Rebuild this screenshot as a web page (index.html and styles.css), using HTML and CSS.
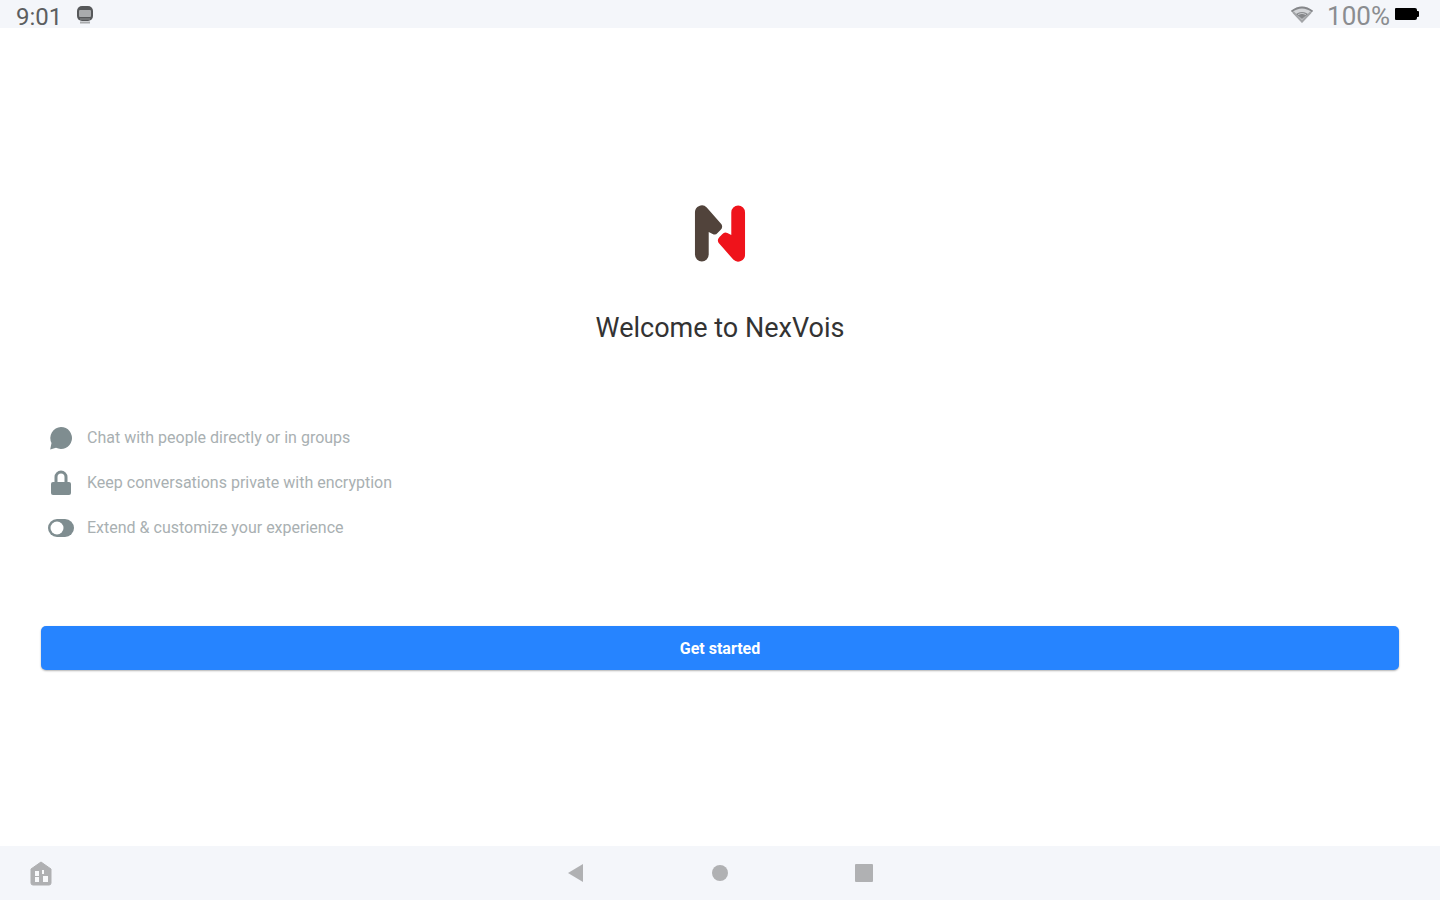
FILE: index.html
```html
<!DOCTYPE html>
<html lang="en">
<head>
    <meta charset="UTF-8">
    <meta name="viewport" content="width=device-width, initial-scale=1.0">
    <title>Welcome to NexVois</title>
    <link rel="stylesheet" href="styles.css">
</head>
<body>
    <header class="status-bar">
        <div class="status-left">
            <span class="clock">9:01</span>
            <svg class="app-icon" width="18" height="18" viewBox="0 0 18 18">
                <rect x="1" y="0" width="16" height="15" rx="5" fill="#56585a"/>
                <rect x="3" y="4" width="12" height="7" rx="1" fill="#a9abad"/>
                <path d="M4 13h10" stroke="#8b8d8f" stroke-width="1"/>
                <path d="M4 16.500h10" stroke="#a9abad" stroke-width="2"/>
            </svg>
        </div>
        <div class="status-right">
            <svg class="wifi" width="24" height="18" viewBox="0 0 24 18">
                <path d="M1 5Q12-4 23 5L12 17z" fill="#d3d5d8"/>
                <path d="M1.500 5.500Q12-2.500 22.500 5.500" fill="none" stroke="#85878a" stroke-width="2"/>
                <path d="M3 6L12 15.500L21 6" fill="none" stroke="#a3a5a8" stroke-width="2"/>
                <path d="M6 8Q12 4 18 8L12 13z" fill="#85878a"/>
                <path d="M8 8.500Q12 6 16 8.500" fill="none" stroke="#c9cbce" stroke-width="1"/>
            </svg>
            <span class="charge">100%</span>
            <svg class="battery" width="26" height="14" viewBox="0 0 26 14">
                <path d="M2 1h19a2 2 0 0 1 2 2v1h1q1 0 1 1v4q0 1-1 1h-1v1a2 2 0 0 1-2 2H2a1 1 0 0 1-1-1V2a1 1 0 0 1 1-1z" fill="#000"/>
            </svg>
        </div>
    </header>

    <main class="welcome">
        <svg class="logo" width="54" height="59" viewBox="0 0 55 59" role="img" aria-label="NexVois">
            <path d="M2 8a7 7 0 0 1 12-5L29 20a5 5 0 0 1-1 6l-3 3a4 4 0 0 1-5 1l-4-2V51a7 7 0 0 1-14 0z" fill="#51433b"/>
            <path d="M2 8a7 7 0 0 1 12-5L29 20a5 5 0 0 1-1 6l-3 3a4 4 0 0 1-5 1l-4-2V51a7 7 0 0 1-14 0z" fill="#ef131b" transform="rotate(180 27.500 29.500)"/>
        </svg>
        <h1>Welcome to NexVois</h1>

        <ul class="features">
            <li>
                <svg width="28" height="28" viewBox="0 0 28 28">
                    <path d="M14 3a11 11 0 1 1-5 20.800L3.200 25.500L4.500 19A11 11 0 0 1 14 3z" fill="#7f8d90"/>
                </svg>
                <span>Chat with people directly or in groups</span>
            </li>
            <li>
                <svg width="28" height="28" viewBox="0 0 28 28">
                    <path d="M9 14V8a5 5 0 0 1 10 0v6" fill="none" stroke="#7f8d90" stroke-width="3"/>
                    <rect x="4" y="13" width="20" height="13" rx="2" fill="#7f8d90"/>
                </svg>
                <span>Keep conversations private with encryption</span>
            </li>
            <li>
                <svg width="28" height="28" viewBox="0 0 28 28">
                    <rect x="1" y="5" width="26" height="18" rx="9" fill="#7f8d90"/>
                    <circle cx="10" cy="14" r="6.500" fill="#fff"/>
                </svg>
                <span>Extend &amp; customize your experience</span>
            </li>
        </ul>

        <button type="button" class="start">Get started</button>
    </main>

    <nav class="nav-bar">
        <button type="button" class="home" aria-label="Home screen">
            <svg width="26" height="26" viewBox="0 0 26 26">
                <path d="M13 2L23 9V23a2 2 0 0 1-2 2H5a2 2 0 0 1-2-2V9z" fill="#afb0b2" stroke="#afb0b2" stroke-linejoin="round"/>
                <path d="M7 11h4v5H7zM7 17h4v5H7zM15 16h5v6h-5zM14 10h2v4h-2z" fill="#f8f9fb"/>
            </svg>
        </button>
        <div class="nav-keys">
            <button type="button" aria-label="Back">
                <svg width="20" height="20" viewBox="0 0 20 20">
                    <path d="M2 10L17 1V19z" fill="#b0b1b3"/>
                </svg>
            </button>
            <button type="button" aria-label="Home">
                <svg width="20" height="20" viewBox="0 0 20 20">
                    <circle cx="10" cy="10" r="8" fill="#b0b1b3"/>
                </svg>
            </button>
            <button type="button" aria-label="Recent apps">
                <svg width="20" height="20" viewBox="0 0 20 20">
                    <rect x="1" y="1" width="18" height="18" rx="1" fill="#b0b1b3"/>
                </svg>
            </button>
        </div>
    </nav>
</body>
</html>
```
FILE: styles.css
```css
* {
    box-sizing: border-box;
}
body {
    font-family: Roboto, sans-serif;
    background-color: #fff;
    margin: 0;
    min-height: 100vh;
    display: flex;
    flex-direction: column;
}
svg {
    display: block;
    flex-shrink: 0;
}

/* Status bar */
.status-bar {
    height: 28px;
    padding: 0 20px 0 16px;
    display: flex;
    justify-content: space-between;
    background-color: #f4f6fa;
    font-size: 24px;
    line-height: 34px;
}
.status-left,
.status-right {
    display: flex;
    align-items: flex-start;
}
.clock {
    color: #5c5e60;
}
.app-icon {
    margin: 6px 0 0 14px;
}
.charge {
    color: #8b8d90;
    font-size: 26px;
    line-height: 32px;
}
.wifi {
    margin: 6px 13px 0 0;
}
.battery {
    margin: 7px 0 0 4px;
}

/* Welcome screen */
.welcome {
    flex: 1;
    padding: 0 41px;
    display: flex;
    flex-direction: column;
    justify-content: center;
}
.logo {
    align-self: center;
}
h1 {
    margin: 48px 0 70px;
    font-size: 27px;
    line-height: 34px;
    font-weight: 400;
    color: #333;
    text-align: center;
}
.features {
    list-style: none;
    margin: 0 0 76px;
    padding: 0 6px;
}
.features li {
    height: 45px;
    display: flex;
    align-items: center;
    gap: 12px;
    font-size: 16px;
    color: #a9b0b2;
}
.start {
    height: 44px;
    border: none;
    border-radius: 5px;
    background-color: #2684ff;
    box-shadow: 0 1px 2px rgba(0, 0, 0, 0.3);
    color: #fff;
    font-family: inherit;
    font-size: 16px;
    font-weight: 700;
    cursor: pointer;
}

/* Navigation bar */
.nav-bar {
    height: 54px;
    padding: 0 17px;
    display: grid;
    grid-template-columns: 1fr auto 1fr;
    align-items: center;
    background-color: #f4f6fa;
}
.nav-bar button {
    width: 48px;
    height: 48px;
    padding: 0;
    border: none;
    background: none;
    display: flex;
    align-items: center;
    justify-content: center;
    cursor: pointer;
}
.nav-keys {
    display: flex;
    gap: 96px;
}
```
